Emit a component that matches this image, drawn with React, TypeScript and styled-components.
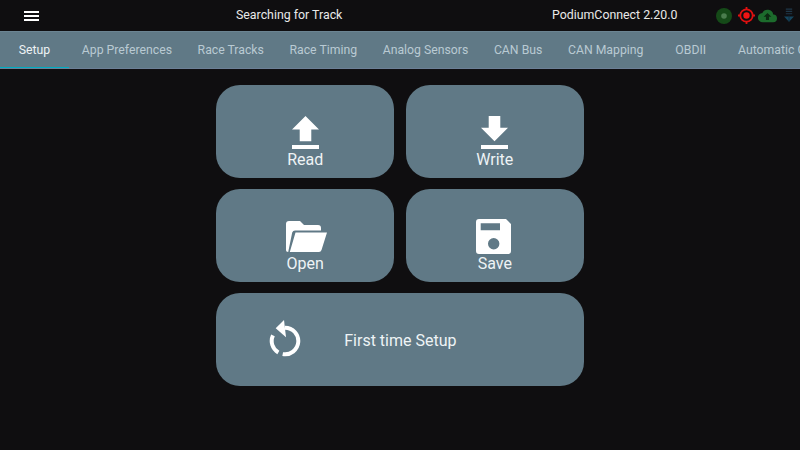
import React from 'react';
import styled, { createGlobalStyle } from 'styled-components';

const GlobalStyle = createGlobalStyle`
    html, body {
        margin: 0;
        padding: 0;
        background: #0f0e10;
        font-family: Roboto, "Liberation Sans", sans-serif;
    }
`;

const tabs = [
    'Setup',
    'App Preferences',
    'Race Tracks',
    'Race Timing',
    'Analog Sensors',
    'CAN Bus',
    'CAN Mapping',
    'OBDII',
    'Automatic Gear',
];

const ReadIcon = () => (
    <svg width="27" height="33" viewBox="5 3 14 17" fill="#fff">
        <path d="M9 16h6v-6h4l-7-7-7 7h4zm-4 2h14v2H5z" />
    </svg>
);

const WriteIcon = () => (
    <svg width="27" height="33" viewBox="5 3 14 17" fill="#fff">
        <path d="M19 9h-4V3H9v6H5l7 7 7-7zM5 18v2h14v-2H5z" />
    </svg>
);

const OpenIcon = () => (
    <svg width="43" height="31" viewBox="-2 0 43 31" fill="#fff">
        <path d="M0 28.500V3a3 3 0 0 1 3-3h11l4 4h14a3 3 0 0 1 3 3v2.500H9a3 3 0 0 0-2.800 2L2.200 31A2.200 2.200 0 0 1 0 28.500z" />
        <path d="M9.500 11.500H41L35.500 29a3 3 0 0 1-3 2H3.800z" />
    </svg>
);

const SaveIcon = () => (
    <svg width="37" height="35" viewBox="0 0 37 35" fill="#fff">
        <path
            fillRule="evenodd"
            d="M3 0H30l5 5v27a3 3 0 0 1-3 3H3a3 3 0 0 1-3-3V3a3 3 0 0 1 3-3zM4.700 4.300v7H24v-7zM17.700 19a5.700 5.700 0 1 0 0 11.400 5.700 5.700 0 0 0 0-11.400z"
        />
    </svg>
);

const RestoreIcon = () => (
    <svg width="32" height="37" viewBox="0 0 32 37" fill="none" stroke="#fff" strokeWidth="4">
        <path d="M16 7.700A13.300 13.300 0 1 1 13.700 34.100" />
        <path d="M9.350 32.500A13.300 13.300 0 0 1 3.950 15.400" />
        <path d="M15 0L6.700 8.200 17 17.200z" fill="#fff" stroke="none" />
    </svg>
);

const Page = styled.div`
    width: 800px;
    height: 450px;
    overflow: hidden;
    display: flex;
    flex-direction: column;
    background: #0f0e10;
    color: #fff;
`;

const TopBar = styled.header`
    height: 31px;
    display: grid;
    grid-template-columns: 236px 316px 164px 1fr;
    align-items: center;
`;

const MenuButton = styled.div`
    width: 15px;
    height: 10px;
    margin-left: 24px;
    box-sizing: border-box;
    border-top: 2px solid #fff;
    border-bottom: 2px solid #fff;
    position: relative;

    &::after {
        content: '';
        position: absolute;
        left: 0;
        right: 0;
        top: 2px;
        height: 2px;
        background: #fff;
    }
`;

const TopText = styled.span`
    font-size: 12.350px;
    line-height: 31px;
    color: #e9e9e9;
`;

const StatusIcons = styled.div`
    display: flex;
    align-items: center;
    height: 31px;
`;

const StatusSvg = styled.svg<{ $gap?: number }>`
    display: block;
    flex: none;
    margin-right: ${({ $gap }) => $gap ?? 0}px;
`;

const TabBar = styled.nav`
    height: 38px;
    box-sizing: border-box;
    display: flex;
    overflow: hidden;
    background: #607986;
    border-top: 1px solid #6b8492;
    border-bottom: 1px solid #6c7f96;
`;

const Tab = styled.div<{ $active?: boolean }>`
    flex: none;
    min-width: 69px;
    padding: 0 12.800px;
    box-sizing: border-box;
    margin-bottom: -1px;
    display: flex;
    align-items: center;
    justify-content: center;
    white-space: nowrap;
    font-size: 12.250px;
    color: ${({ $active }) => ($active ? '#eef3f5' : '#b9cad3')};
    border-bottom: 2px solid ${({ $active }) => ($active ? '#00acc1' : 'transparent')};
`;

const Content = styled.main`
    flex: 1;
    padding-top: 16px;
    display: grid;
    grid-template-columns: 178px 178px;
    grid-auto-rows: 93px;
    gap: 11px 11.500px;
    justify-content: center;
`;

const ActionButton = styled.button`
    padding: 0;
    border: none;
    border-radius: 24px;
    background: #607986;
    color: #eef3f5;
    font-family: inherit;
    font-size: 16px;
    line-height: 16px;
    display: flex;
    flex-direction: column;
    align-items: center;
`;

const IconSlot = styled.div`
    height: 38px;
    margin: 28px 0 1px;
    display: flex;
    align-items: center;
    justify-content: center;

    svg {
        display: block;
    }
`;

const SetupButton = styled.button`
    grid-column: 1 / span 2;
    padding: 2px 0 0 53px;
    border: none;
    border-radius: 24px;
    background: #607986;
    color: #eef3f5;
    font-family: inherit;
    font-size: 16px;
    display: flex;
    align-items: center;
    gap: 43px;

    svg {
        display: block;
        margin-bottom: 5px;
    }
`;

const App: React.FC = () => {
    return (
        <Page>
            <GlobalStyle />
            <TopBar>
                <MenuButton />
                <TopText>Searching for Track</TopText>
                <TopText>PodiumConnect 2.20.0</TopText>
                <StatusIcons>
                    <StatusSvg width="16" height="16" viewBox="0 0 16 16" $gap={5.5}>
                        <circle cx="8" cy="8" r="8" fill="#154a18" />
                        <circle cx="8" cy="8" r="2.800" fill="#4a7d4d" />
                    </StatusSvg>
                    <StatusSvg width="17" height="17" viewBox="0 0 17 17" $gap={3.5}>
                        <circle cx="8.500" cy="8.500" r="6.200" fill="none" stroke="#e01010" strokeWidth="1.800" />
                        <circle cx="8.500" cy="8.500" r="3.200" fill="#f01414" />
                        <path d="M8.500 0v3M8.500 14v3M0 8.500h3M14 8.500h3" stroke="#e01010" strokeWidth="1.800" />
                    </StatusSvg>
                    <StatusSvg width="19" height="14" viewBox="0 0 24 18" $gap={7}>
                        <path
                            fill="#1c6b2c"
                            d="M19.400 7A7.500 7.500 0 0 0 5.400 5 6 6 0 0 0 6 17h13a5 5 0 0 0 .4-10z"
                        />
                        <path fill="#0c2a12" d="M14 10v4h-4v-4H7l5-5 5 5z" />
                    </StatusSvg>
                    <StatusSvg width="10" height="15" viewBox="0 0 11 16">
                        <path d="M2 1h7M2 3.500h7M2 6h7" stroke="#1f3748" strokeWidth="1.200" />
                        <path d="M0 9h11l-5.500 6z" fill="#16465f" />
                        <path d="M5.500 8v7" stroke="#0f2a3a" strokeWidth="1" />
                    </StatusSvg>
                </StatusIcons>
            </TopBar>
            <TabBar>
                {tabs.map((tab, index) => (
                    <Tab key={tab} $active={index === 0}>{tab}</Tab>
                ))}
            </TabBar>
            <Content>
                <ActionButton><IconSlot><ReadIcon /></IconSlot>Read</ActionButton>
                <ActionButton><IconSlot><WriteIcon /></IconSlot>Write</ActionButton>
                <ActionButton><IconSlot><OpenIcon /></IconSlot>Open</ActionButton>
                <ActionButton><IconSlot><SaveIcon /></IconSlot>Save</ActionButton>
                <SetupButton><RestoreIcon />First time Setup</SetupButton>
            </Content>
        </Page>
    );
};

export default App;
